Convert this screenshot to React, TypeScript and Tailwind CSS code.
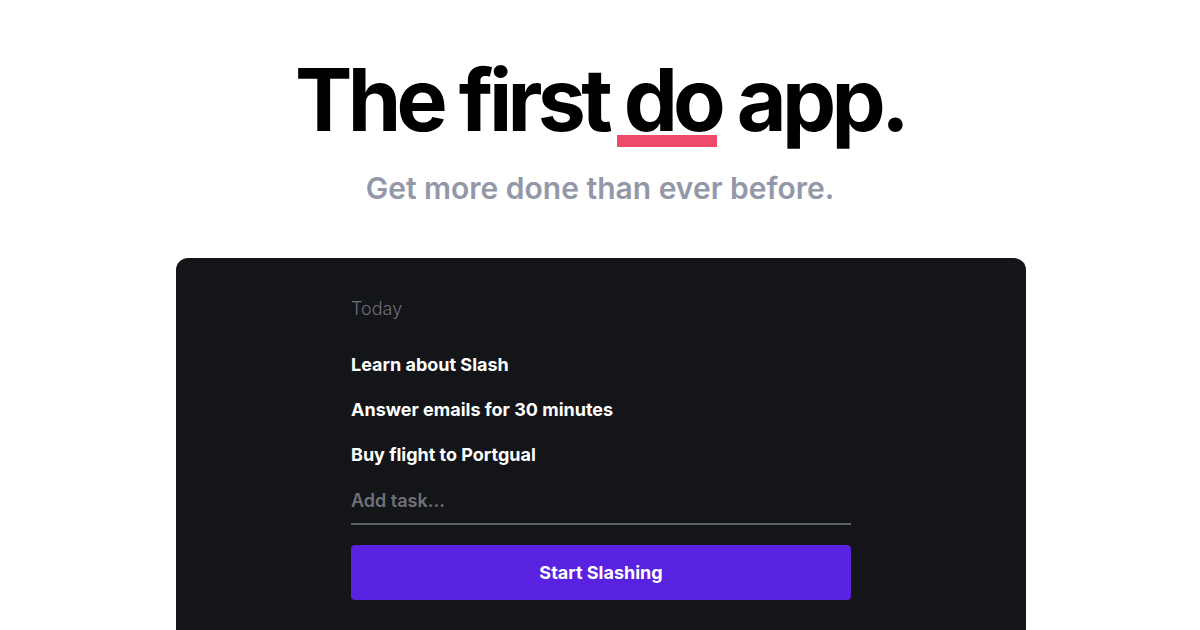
import React from "react";

const tasks = ["Learn about Slash", "Answer emails for 30 minutes", "Buy flight to Portgual"];

export default function App() {
  return (
    <div
      className="h-[630px] w-[1200px] overflow-hidden bg-white flex flex-col items-center"
      style={{ fontFamily: "Inter, 'Liberation Sans', sans-serif" }}
    >
      <h1 className="mt-[52px] text-[86px] leading-[96px] font-bold tracking-[-0.055em] text-black">
        The first{" "}
        <span className="relative inline-block">
          do
          <span className="absolute left-[-7px] right-[4px] top-[83px] h-[12px] bg-[#ee4a6c]" />
        </span>{" "}
        app.
      </h1>
      <p className="mt-[22px] text-[30px] leading-[36px] font-semibold text-[#9398a9]">
        Get more done than ever before.
      </p>

      <div className="ml-[2px] mt-[52px] w-[850px] flex-1 rounded-t-[12px] bg-[#141519] flex justify-center">
        <div className="w-[500px] pt-[39px]">
          <div className="text-[18px] leading-[24px] font-light text-[#6c6e78]">Today</div>
          <ul className="mt-[32px] flex flex-col gap-[21px]">
            {tasks.map((t) => (
              <li key={t} className="text-[18px] leading-[24px] font-bold text-white">
                {t}
              </li>
            ))}
          </ul>
          <div className="mt-[22px] border-b-2 border-[#5b5e67] pb-[10px] text-[18px] leading-[24px] font-semibold text-[#6f7078]">
            Add task...
          </div>
          <button className="mt-[20px] h-[55px] w-full rounded-[4px] bg-[#5822e0] text-[18px] font-bold text-white">
            Start Slashing
          </button>
        </div>
      </div>
    </div>
  );
}
